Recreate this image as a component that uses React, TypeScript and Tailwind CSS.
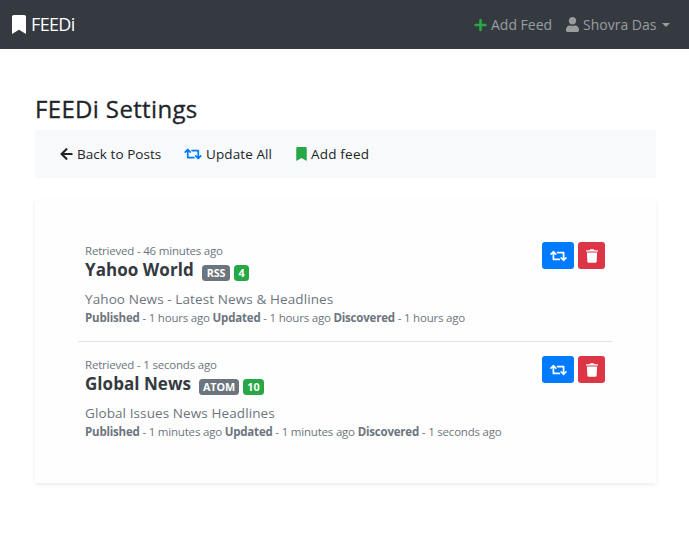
import { FaArrowLeft, FaBookmark, FaPlus, FaRetweet, FaUser } from 'react-icons/fa';

type Feed = {
  retrieved: string;
  title: string;
  kind: string;
  count: number;
  description: string;
  published: string;
  updated: string;
  discovered: string;
  titleWidth: string;
  kindWidth: string;
  countWidth: string;
};

const feeds: Feed[] = [
  {
    retrieved: '46 minutes ago',
    title: 'Yahoo World',
    kind: 'RSS',
    count: 4,
    description: 'Yahoo News - Latest News & Headlines',
    published: '1 hours ago',
    updated: '1 hours ago',
    discovered: '1 hours ago',
    titleWidth: 'w-[117px] tracking-[0.05px]',
    kindWidth: 'w-[28px]',
    countWidth: 'w-[15px]',
  },
  {
    retrieved: '1 seconds ago',
    title: 'Global News',
    kind: 'ATOM',
    count: 10,
    description: 'Global Issues News Headlines',
    published: '1 minutes ago',
    updated: '1 minutes ago',
    discovered: '1 seconds ago',
    titleWidth: 'w-[114px] tracking-[0.05px]',
    kindWidth: 'w-[40px]',
    countWidth: 'w-[21px]',
  },
];

function TrashIcon() {
  return (
    <svg className="h-[14px] w-[12px]" viewBox="0 0 12 14" fill="currentColor">
      <path d="M0.4 1.2H3.6L4 0.5Q4.1 0.2 4.5 0.2H7.5Q7.9 0.2 8 0.5L8.4 1.2H11.6Q12 1.2 12 1.6V2.5H0V1.6Q0 1.2 0.4 1.2Z" />
      <path d="M0.9 3.5H11.1L10.6 12.6Q10.5 13.8 9.3 13.8H2.7Q1.5 13.8 1.4 12.6Z" />
    </svg>
  );
}

function Navbar() {
  return (
    <nav className="flex h-[49px] items-center justify-between bg-[#343a40] pl-3 pr-[19px]">
      <a className="flex items-center text-[18px] leading-[27px] text-white">
        <FaBookmark className="h-[19px] w-[14px]" preserveAspectRatio="none" viewBox="0 0 384 512" />
        <span className="ml-[5px] tracking-[-0.65px]">FEEDi</span>
      </a>
      <div className="flex items-center text-[14px] leading-[22px] text-[#9a9da0]">
        <FaPlus className="h-[14px] w-[13px] text-[#28a745]" />
        <span className="ml-1 w-[61px] whitespace-nowrap">Add Feed</span>
        <FaUser className="ml-[14px] h-[15px] w-[13px]" />
        <span className="ml-[4px] w-[71px] whitespace-nowrap">Shovra Das</span>
        <span className="ml-[8px] border-x-4 border-t-4 border-x-transparent border-t-[#9a9da0]" />
      </div>
    </nav>
  );
}

function Toolbar() {
  return (
    <div className="flex h-12 items-center bg-[#f8f9fa] pl-[25px] text-[13.5px] leading-5 text-[#212529]">
      <FaArrowLeft className="h-[14px] w-[13px]" />
      <span className="ml-[4px] w-[84px] whitespace-nowrap tracking-[0.05px]">Back to Posts</span>
      <FaRetweet className="ml-[23px] h-[14px] w-[18px] text-[#007bff]" />
      <span className="ml-[4px] w-[67px] whitespace-nowrap tracking-[0.1px]">Update All</span>
      <FaBookmark className="ml-[23px] h-[14px] w-[11px] text-[#28a745]" />
      <span className="ml-[4px] whitespace-nowrap tracking-[0.2px]">Add feed</span>
    </div>
  );
}

function FeedRow({ feed }: { feed: Feed }) {
  return (
    <div className="flex justify-between px-[7px] text-[#6c757d]">
      <div className="whitespace-nowrap">
        <div className="h-[18px] text-[11.5px] leading-[18px] tracking-[-0.2px]">Retrieved - {feed.retrieved}</div>
        <div className="flex h-5 items-center">
          <h5 className={`${feed.titleWidth} text-[17px] font-bold leading-5 text-[#343a40]`}>{feed.title}</h5>
          <span className={`${feed.kindWidth} mt-[6px] h-4 rounded-[3.5px] bg-[#6c757d] text-center text-[10.8px] font-bold leading-4 tracking-[-0.1px] text-white`}>{feed.kind}</span>
          <span className={`${feed.countWidth} ml-1 mt-[6px] h-4 rounded-[3.5px] bg-[#28a745] text-center text-[10.8px] font-bold leading-4 text-white`}>{feed.count}</span>
        </div>
        <div className="mt-[9px] h-5 text-[13.5px] leading-5 tracking-[0.1px]">{feed.description}</div>
        <div className="h-[18px] text-[11.5px] leading-[18px] tracking-[-0.2px]">
          <b>Published</b> - {feed.published} <b>Updated</b> - {feed.updated} <b>Discovered</b> - {feed.discovered}
        </div>
      </div>
      <div className="flex gap-1 text-white">
        <button className="flex h-[27px] w-8 items-center justify-center rounded-[3px] bg-[#007bff]">
          <FaRetweet className="h-[14px] w-[17px]" />
        </button>
        <button className="flex h-[27px] w-[27px] items-center justify-center rounded-[3px] bg-[#dc3545]">
          <TrashIcon />
        </button>
      </div>
    </div>
  );
}

export default function App() {
  return (
    <div className="h-[543px] overflow-hidden bg-white font-['Open_Sans','Noto_Sans',sans-serif]">
      <Navbar />
      <main className="pl-[35px] pr-[33px] pt-[44px]">
        <h3 className="h-[37px] whitespace-nowrap text-[24px] font-medium leading-[32px] tracking-[0.35px] text-[#212529] [-webkit-text-stroke:0.3px_#212529]">FEEDi Settings</h3>
        <Toolbar />
        <section className="mt-[21px] h-[284px] bg-[#fefefe] pl-[43px] pr-11 pt-[43px] shadow-[0_2px_4px_rgba(0,0,0,0.075)]">
          <FeedRow feed={feeds[0]} />
          <div className="mb-[14px] mt-[14px] h-px bg-[#dfe1e3]" />
          <FeedRow feed={feeds[1]} />
        </section>
      </main>
    </div>
  );
}
